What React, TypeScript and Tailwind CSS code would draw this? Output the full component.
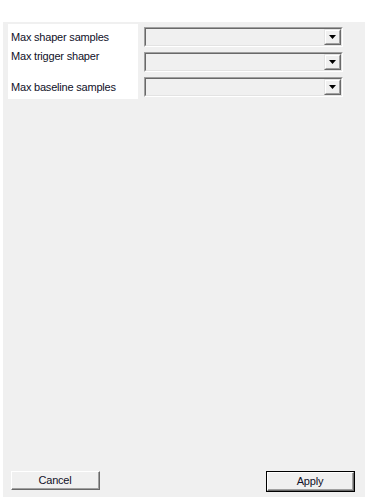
import React from "react";

const labels = ["Max shaper samples", "Max trigger shaper", "Max baseline samples"];

function Combo() {
  return (
    <div className="h-5 w-[199px] border border-t-[#a0a0a0] border-l-[#a0a0a0] border-b-white border-r-white">
      <div className="flex h-full justify-end border border-t-[#696969] border-l-[#696969] border-b-[#e3e3e3] border-r-[#e3e3e3] bg-[#f0f0f0]">
        <div className="h-full w-[17px] border border-t-[#e3e3e3] border-l-[#e3e3e3] border-b-[#696969] border-r-[#696969]">
          <div className="flex h-full items-center justify-center border border-t-white border-l-white border-b-[#a0a0a0] border-r-[#a0a0a0] bg-[#f0f0f0]">
            <svg width="7" height="4" viewBox="0 0 7 4">
              <path d="M0 0h7L3.5 4z" fill="#000" />
            </svg>
          </div>
        </div>
      </div>
    </div>
  );
}

function Button({ label, primary }: { label: string; primary?: boolean }) {
  return (
    <div className={primary ? "w-[89px] border border-black" : "w-[89px]"}>
      <div className="border border-t-white border-l-white border-b-[#696969] border-r-[#696969]">
        <div className="flex h-[17px] items-center justify-center border-b border-r border-b-[#a0a0a0] border-r-[#a0a0a0] bg-[#f0f0f0] text-[11px] tracking-[-0.2px] text-[#101028]">
          {label}
        </div>
      </div>
    </div>
  );
}

export default function App() {
  return (
    <div
      className="h-[501px] w-[368px] bg-white pl-[3px] pt-[22px]"
      style={{ fontFamily: '"Liberation Sans", Arial, sans-serif' }}
    >
      <div className="flex h-[475px] w-[362px] flex-col justify-between bg-[#f0f0f0]">
        <div className="flex pt-[2px]">
          <div className="ml-[5px] flex h-[75px] w-[130px] flex-col bg-white pl-[3px] pt-[7px] text-[11px] leading-[13px] tracking-[-0.2px] text-[#101028]">
            <span>{labels[0]}</span>
            <span className="mt-[6px]">{labels[1]}</span>
            <span className="mt-[18px]">{labels[2]}</span>
          </div>
          <div className="ml-[6px] flex flex-col gap-[5px] pt-[3px]">
            <Combo />
            <Combo />
            <Combo />
          </div>
        </div>
        <div className="flex justify-between pb-[5px] pl-[8px] pr-[10px]">
          <Button label="Cancel" />
          <Button label="Apply" primary />
        </div>
      </div>
    </div>
  );
}
